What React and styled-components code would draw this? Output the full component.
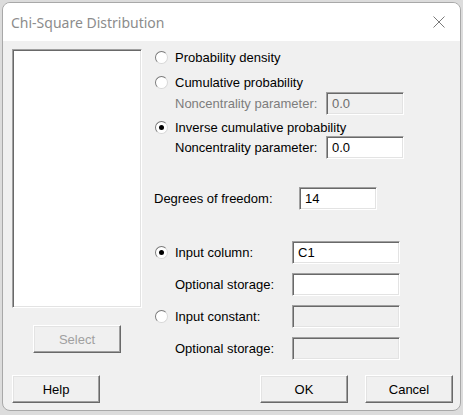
import React from 'react';
import styled, { createGlobalStyle } from 'styled-components';

const GlobalStyle = createGlobalStyle`
  html, body {
    margin: 0;
    padding: 0;
  }
  body {
    background: #dcdcdc;
    font-family: 'Liberation Sans', Arial, sans-serif;
    font-size: 13px;
  }
`;

const Window = styled.div`
  box-sizing: border-box;
  margin: 2px 0 0 2px;
  width: 459px;
  height: 409px;
  border: 1px solid #a8a8a8;
  border-radius: 8px;
  overflow: hidden;
  background: #f0f0f0;
  display: flex;
  flex-direction: column;
`;

const TitleBar = styled.div`
  flex: none;
  height: 38px;
  background: #fff;
  display: flex;
  align-items: center;
  justify-content: space-between;
  padding: 0 15px 0 8px;
`;

const Title = styled.span`
  font-family: 'Noto Sans', 'Open Sans', sans-serif;
  font-size: 14px;
  color: #8c8c8c;
`;

const Body = styled.div`
  display: flex;
  gap: 12px;
  padding: 8px 0 0 9px;
`;

const LeftColumn = styled.div`
  display: flex;
  flex-direction: column;
  width: 130px;
`;

const RightColumn = styled.div`
  display: flex;
  flex-direction: column;
`;

const sunken = `
  box-sizing: border-box;
  border: 1px solid;
  border-color: #a0a0a0 #fff #fff #a0a0a0;
  box-shadow: inset 1px 1px 0 #696969, inset -1px -1px 0 #e3e3e3;
`;

const ListBox = styled.div`
  ${sunken}
  width: 130px;
  height: 259px;
  background: #fff;
`;

const Button = styled.button`
  box-sizing: border-box;
  width: 88px;
  height: 28px;
  padding: 0;
  margin-left: ${p => p.$ml || 0}px;
  margin-top: ${p => p.$mt || 0}px;
  font-family: 'Liberation Sans', Arial, sans-serif;
  font-size: 13px;
  color: ${p => (p.disabled ? '#a0a0a0' : '#000')};
  background: #f0f0f0;
  border: 1px solid;
  border-color: #fff #696969 #696969 #fff;
  box-shadow: inset -1px -1px 0 #a0a0a0, inset 1px 1px 0 #e3e3e3;
`;

const Row = styled.div`
  display: flex;
  align-items: center;
  height: ${p => p.$h}px;
  margin-top: ${p => p.$mt || 0}px;
  padding-left: ${p => p.$indent || 0}px;
`;

const Radio = styled.span`
  box-sizing: border-box;
  position: relative;
  flex: none;
  width: 13px;
  height: 13px;
  margin: 0 7px 0 1px;
  border-radius: 50%;
  background: #fff;
  border: 1px solid;
  border-color: #7a7a7a #d8d8d8 #d8d8d8 #7a7a7a;

  &::after {
    content: '';
    display: ${p => (p.$checked ? 'block' : 'none')};
    position: absolute;
    left: 3px;
    top: 3px;
    width: 5px;
    height: 5px;
    border-radius: 50%;
    background: #000;
  }
`;

const Label = styled.span`
  flex: none;
  width: ${p => (p.$w ? `${p.$w}px` : 'auto')};
  color: ${p => (p.$muted ? '#7d7d7d' : '#000')};
  white-space: nowrap;
`;

const Field = styled.input`
  ${sunken}
  width: ${p => p.$w}px;
  height: 23px;
  padding: 0 0 0 5px;
  margin: 0;
  font-family: 'Liberation Sans', Arial, sans-serif;
  font-size: 13px;
  color: ${p => (p.disabled ? '#6d6d6d' : '#000')};
  background: ${p => (p.disabled ? '#f0f0f0' : '#fff')};
  outline: none;
`;

const Footer = styled.div`
  display: flex;
  gap: 17px;
  margin-top: auto;
  padding: 0 7px 7px 9px;
`;

const Spacer = styled.span`
  flex: 1;
`;

const CloseIcon = () => (
  <svg width="12" height="12" viewBox="0 0 12 12">
    <path d="M0.5 0.5 L11.5 11.5 M11.5 0.5 L0.5 11.5" stroke="#7a7a7a" strokeWidth="1" fill="none" />
  </svg>
);

const App = () => (
  <>
    <GlobalStyle />
    <Window>
      <TitleBar>
        <Title>Chi-Square Distribution</Title>
        <CloseIcon />
      </TitleBar>
      <Body>
        <LeftColumn>
          <ListBox />
          <Button disabled $ml={21} $mt={17}>Select</Button>
        </LeftColumn>
        <RightColumn>
          <Row $h={16}>
            <Radio />
            <Label>Probability density</Label>
          </Row>
          <Row $h={20} $mt={7}>
            <Radio />
            <Label>Cumulative probability</Label>
          </Row>
          <Row $h={23} $indent={21}>
            <Label $w={151} $muted>Noncentrality parameter:</Label>
            <Field $w={78} disabled readOnly value="0.0" />
          </Row>
          <Row $h={18} $mt={3}>
            <Radio $checked />
            <Label>Inverse cumulative probability</Label>
          </Row>
          <Row $h={23} $indent={21}>
            <Label $w={151}>Noncentrality parameter:</Label>
            <Field $w={78} readOnly value="0.0" />
          </Row>
          <Row $h={23} $mt={28}>
            <Label $w={145}>Degrees of freedom:</Label>
            <Field $w={78} readOnly value="14" />
          </Row>
          <Row $h={23} $mt={31}>
            <Radio $checked />
            <Label $w={117}>Input column:</Label>
            <Field $w={108} readOnly value="C1" />
          </Row>
          <Row $h={23} $mt={9} $indent={21}>
            <Label $w={117}>Optional storage:</Label>
            <Field $w={108} readOnly value="" />
          </Row>
          <Row $h={23} $mt={9}>
            <Radio />
            <Label $w={117}>Input constant:</Label>
            <Field $w={108} disabled readOnly value="" />
          </Row>
          <Row $h={23} $mt={9} $indent={21}>
            <Label $w={117}>Optional storage:</Label>
            <Field $w={108} disabled readOnly value="" />
          </Row>
        </RightColumn>
      </Body>
      <Footer>
        <Button>Help</Button>
        <Spacer />
        <Button>OK</Button>
        <Button>Cancel</Button>
      </Footer>
    </Window>
  </>
);

export default App;
